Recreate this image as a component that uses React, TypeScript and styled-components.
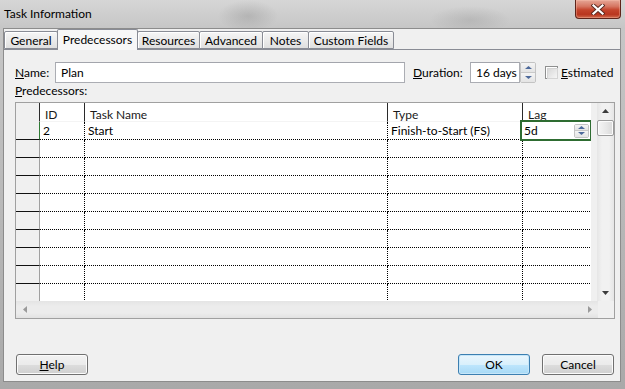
import styled, { createGlobalStyle } from 'styled-components';

const GlobalStyle = createGlobalStyle`
  html, body { margin: 0; padding: 0; background: #fff; }
  body { font-family: Lato, "Noto Sans", sans-serif; font-size: 12px; color: #000; }
  * { box-sizing: border-box; }
`;

const tabs = [
  { label: 'General', w: 54 },
  { label: 'Predecessors', w: 81, selected: true },
  { label: 'Resources', w: 63 },
  { label: 'Advanced', w: 64 },
  { label: 'Notes', w: 47 },
  { label: 'Custom Fields', w: 86 },
];

const columns = [
  { title: 'ID', w: 45 },
  { title: 'Task Name', w: 303 },
  { title: 'Type', w: 135 },
  { title: 'Lag', w: 69 },
];

const rows = [['2', 'Start', 'Finish-to-Start (FS)', '5d'], ...Array.from({ length: 9 }, () => ['', '', '', ''])];

const Window = styled.div`
  width: 625px;
  height: 389px;
  display: flex;
  flex-direction: column;
  overflow: hidden;
  background:
    radial-gradient(ellipse 30px 16px at 248px 16px, rgba(70, 70, 70, 0.18), transparent),
    radial-gradient(ellipse 40px 14px at 470px 20px, rgba(70, 70, 70, 0.14), transparent),
    linear-gradient(180deg, #d6d6d6 0, #c6c6c6 28px, #b9b9b9 200px, #a9a9a9 100%);
`;

const TitleBar = styled.div`
  height: 28px;
  flex: none;
  display: flex;
  justify-content: space-between;
  align-items: flex-start;
  padding-left: 4px;
`;

const Title = styled.div`
  line-height: 28px;
  font-size: 12px;
  color: #000;
`;

const CloseButton = styled.div`
  width: 46px;
  height: 19px;
  margin-right: 4px;
  border: 1px solid #5e241a;
  border-top: none;
  border-radius: 0 0 4px 4px;
  background: linear-gradient(180deg, #e6a696 0%, #d67763 35%, #c4442c 55%, #b9361f 80%, #cf6a4e 100%);
  box-shadow: inset 0 0 0 1px rgba(255, 200, 180, 0.35);
  display: flex;
  align-items: center;
  justify-content: center;
`;

const Client = styled.div`
  flex: 1;
  margin: 0 4px 7px 3px;
  border: 1px solid #8c8c8c;
  background: #f0f0f0;
  display: flex;
  flex-direction: column;
`;

const TabStrip = styled.div`
  height: 20px;
  flex: none;
  display: flex;
  align-items: flex-end;
`;

const Tab = styled.div<{ $w: number; $selected?: boolean }>`
  width: ${(p) => p.$w}px;
  height: ${(p) => (p.$selected ? 21 : 18)}px;
  margin-left: -1px;
  margin-bottom: ${(p) => (p.$selected ? -1 : 0)}px;
  &:first-child { margin-left: 0; }
  border: 1px solid #898c95;
  border-bottom: ${(p) => (p.$selected ? 'none' : '1px solid #898c95')};
  border-radius: 2px 2px 0 0;
  background: ${(p) =>
    p.$selected ? '#f7f7f7' : 'linear-gradient(180deg, #f6f6f6 0%, #ebebeb 50%, #dfdfdf 100%)'};
  box-shadow: ${(p) => (p.$selected ? 'none' : 'inset 1px 1px 0 #fff')};
  position: relative;
  z-index: ${(p) => (p.$selected ? 1 : 0)};
  display: flex;
  justify-content: center;
  align-items: ${(p) => (p.$selected ? 'flex-start' : 'center')};
  padding-top: ${(p) => (p.$selected ? 2 : 0)}px;
  color: #000;
  white-space: nowrap;
`;

const Panel = styled.div`
  flex: 1;
  border-top: 1px solid #898c95;
  padding: 12px 5px 6px 11px;
  display: flex;
  flex-direction: column;
`;

const FieldRow = styled.div`
  height: 21px;
  display: flex;
  align-items: center;
`;

const Label = styled.div<{ $w?: number; $ml?: number }>`
  width: ${(p) => (p.$w ? `${p.$w}px` : 'auto')};
  margin-left: ${(p) => p.$ml ?? 0}px;
  white-space: nowrap;
`;

const Key = styled.span`
  text-decoration: underline;
`;

const TextBox = styled.div<{ $w: number }>`
  width: ${(p) => p.$w}px;
  height: 21px;
  border: 1px solid #abadb3;
  border-top-color: #a3a5ac;
  background: #fff;
  padding-left: 5px;
  display: flex;
  align-items: center;
`;

const Spinner = styled.div<{ $w: number; $h: number }>`
  width: ${(p) => p.$w}px;
  height: ${(p) => p.$h}px;
  display: flex;
  flex-direction: column;
  border: 1px solid #c3c3c3;
  border-radius: 2px;
  overflow: hidden;
`;

const SpinHalf = styled.div`
  flex: 1;
  display: flex;
  align-items: center;
  justify-content: center;
  background: linear-gradient(180deg, #f4f4f4, #e4e4e4);
  & + & { border-top: 1px solid #c9c9c9; }
`;

const CheckWrap = styled.div`
  margin-left: 9px;
  display: flex;
  align-items: center;
  gap: 3px;
`;

const CheckBox = styled.div`
  width: 13px;
  height: 13px;
  border: 1px solid #8e8f8f;
  background: #fff;
  padding: 1px;
  &::after {
    content: '';
    display: block;
    width: 100%;
    height: 100%;
    border: 1px solid #d4d4d4;
    background: linear-gradient(135deg, #d8d8d8, #f6f6f6);
  }
`;

const SectionLabel = styled.div`
  height: 18px;
  margin-top: 1px;
  line-height: 14px;
`;

const GridFrame = styled.div`
  width: 600px;
  height: 217px;
  border: 1px solid #a0a0a0;
  display: flex;
  flex-direction: column;
  background: #f0f0f0;
`;

const GridMain = styled.div`
  height: 198px;
  display: flex;
`;

const Table = styled.div`
  width: 576px;
  overflow: hidden;
  display: grid;
  grid-template-columns: 24px ${columns.map((c) => `${c.w}px`).join(' ')};
  grid-template-rows: 19px;
  grid-auto-rows: 18px;
  background: #fff;
`;

const Corner = styled.div`
  background: #f0f0f0;
  border-right: 1px solid #2a2a2a;
  border-bottom: 1px solid #f0f0f0;
`;

const HeadCell = styled.div<{ $last?: boolean }>`
  background: #fff;
  border-right: 1px solid ${(p) => (p.$last ? '#a0a0a0' : '#2a2a2a')};
  border-bottom: 1px solid #f4f4f4;
  padding: 4px 0 0 5px;
  color: #1a1a1a;
`;

const RowHead = styled.div<{ $active?: boolean }>`
  background: #f0f0f0;
  border-bottom: 1px solid #111;
  border-right: 1px solid ${(p) => (p.$active ? '#2f7a34' : '#a0a0a0')};
`;

const Cell = styled.div<{ $last?: boolean }>`
  position: relative;
  background: #fff;
  border-bottom: 1px dotted #000;
  border-right: 1px ${(p) => (p.$last ? 'solid #a0a0a0' : 'dotted #000')};
  padding-left: 3px;
  line-height: 17px;
  white-space: nowrap;
`;

const LagEditor = styled.div`
  position: absolute;
  left: -3px;
  top: -2px;
  width: 72px;
  height: 21px;
  border: 2px solid #2e6c31;
  background: #fff;
  display: flex;
  align-items: center;
  justify-content: space-between;
  padding: 0 1px 0 2px;
  z-index: 2;
`;

const Gutter = styled.div`
  width: 6px;
  background: #f0f0f0;
`;

const VScroll = styled.div`
  flex: 1;
  display: flex;
  flex-direction: column;
  background: linear-gradient(90deg, #e6e6e6, #f1f1f1 30%, #f1f1f1 70%, #e6e6e6);
`;

const ScrollBtn = styled.div<{ $size: number }>`
  flex: none;
  width: ${(p) => p.$size}px;
  height: ${(p) => p.$size}px;
  display: flex;
  align-items: center;
  justify-content: center;
`;

const VThumb = styled.div`
  height: 16px;
  margin: 1px 0 0 0;
  border: 1px solid #9b9b9b;
  border-radius: 2px;
  background: linear-gradient(90deg, #f5f5f5, #e6e6e6 60%, #d9d9d9);
  box-shadow: inset 0 0 0 1px #fbfbfb;
`;

const Fill = styled.div`
  flex: 1;
`;

const HScrollRow = styled.div`
  height: 17px;
  display: flex;
`;

const HScroll = styled.div`
  width: 582px;
  display: flex;
  justify-content: space-between;
  background: linear-gradient(180deg, #e4e4e4, #ececec 30%, #ececec 70%, #e2e2e2);
`;

const ButtonRow = styled.div`
  margin-top: auto;
  display: flex;
  align-items: center;
  gap: 12px;
  padding: 0 1px 0 1px;
`;

const Button = styled.div<{ $primary?: boolean }>`
  width: 72px;
  height: 21px;
  border: 1px solid ${(p) => (p.$primary ? '#3c7fb1' : '#707070')};
  border-radius: 3px;
  background: ${(p) =>
    p.$primary
      ? 'linear-gradient(180deg, #eaf6fd 0%, #d9f0fc 50%, #bee6fd 51%, #a7d9f5 100%)'
      : 'linear-gradient(180deg, #f2f2f2 0%, #ebebeb 50%, #dddddd 51%, #cfcfcf 100%)'};
  box-shadow: inset 0 0 0 1px ${(p) => (p.$primary ? '#c6e6f9' : '#fbfbfb')};
  display: flex;
  align-items: center;
  justify-content: center;
  color: #000;
  &:first-child { margin-right: auto; }
`;

const Tri = ({ dir, color, w = 7, h = 4 }: { dir: 'up' | 'down' | 'left' | 'right'; color: string; w?: number; h?: number }) => {
  const pts =
    dir === 'up'
      ? `0,${h} ${w / 2},0 ${w},${h}`
      : dir === 'down'
      ? `0,0 ${w},0 ${w / 2},${h}`
      : dir === 'left'
      ? `${w},0 ${w},${h} 0,${h / 2}`
      : `0,0 0,${h} ${w},${h / 2}`;
  return (
    <svg width={w} height={h} viewBox={`0 0 ${w} ${h}`}>
      <polygon points={pts} fill={color} />
    </svg>
  );
};

const CloseGlyph = () => (
  <svg width="14" height="11" viewBox="0 0 14 11">
    <path d="M2.5 1.5 L11.5 9.5 M11.5 1.5 L2.5 9.5" stroke="#5a2a20" strokeWidth="4" strokeLinecap="square" />
    <path d="M2.5 1.5 L11.5 9.5 M11.5 1.5 L2.5 9.5" stroke="#fff" strokeWidth="2.2" strokeLinecap="square" />
  </svg>
);

const SpinButtons = ({ w, h }: { w: number; h: number }) => (
  <Spinner $w={w} $h={h}>
    <SpinHalf>
      <Tri dir="up" color="#4e6a9b" w={7} h={3} />
    </SpinHalf>
    <SpinHalf>
      <Tri dir="down" color="#4e6a9b" w={7} h={3} />
    </SpinHalf>
  </Spinner>
);

const App = () => {
  return (
    <>
      <GlobalStyle />
      <Window>
        <TitleBar>
          <Title>Task Information</Title>
          <CloseButton>
            <CloseGlyph />
          </CloseButton>
        </TitleBar>
        <Client>
          <TabStrip>
            {tabs.map((t) => (
              <Tab key={t.label} $w={t.w} $selected={t.selected}>
                {t.label}
              </Tab>
            ))}
          </TabStrip>
          <Panel>
            <FieldRow>
              <Label $w={40}>
                <Key>N</Key>ame:
              </Label>
              <TextBox $w={350}>Plan</TextBox>
              <Label $w={57} $ml={8}>
                <Key>D</Key>uration:
              </Label>
              <TextBox $w={50}>16 days</TextBox>
              <SpinButtons w={16} h={21} />
              <CheckWrap>
                <CheckBox />
                <Label>
                  <Key>E</Key>stimated
                </Label>
              </CheckWrap>
            </FieldRow>
            <SectionLabel>
              <Key>P</Key>redecessors:
            </SectionLabel>
            <GridFrame>
              <GridMain>
                <Table>
                  <Corner />
                  {columns.map((c, i) => (
                    <HeadCell key={c.title} $last={i === columns.length - 1}>
                      {c.title}
                    </HeadCell>
                  ))}
                  {rows.map((r, ri) => [
                    <RowHead key={`h${ri}`} $active={ri === 0} />,
                    ...r.map((v, ci) => {
                      const last = ci === r.length - 1;
                      return (
                        <Cell key={`${ri}-${ci}`} $last={last}>
                          {last && ri === 0 ? (
                            <LagEditor>
                              <span>{v}</span>
                              <SpinButtons w={15} h={14} />
                            </LagEditor>
                          ) : (
                            v
                          )}
                        </Cell>
                      );
                    }),
                  ])}
                </Table>
                <Gutter />
                <VScroll>
                  <ScrollBtn $size={16}>
                    <Tri dir="up" color="#3c3c3c" />
                  </ScrollBtn>
                  <VThumb />
                  <Fill />
                  <ScrollBtn $size={17}>
                    <Tri dir="down" color="#3c3c3c" />
                  </ScrollBtn>
                </VScroll>
              </GridMain>
              <HScrollRow>
                <HScroll>
                  <ScrollBtn $size={17}>
                    <Tri dir="left" color="#9a9a9a" w={4} h={7} />
                  </ScrollBtn>
                  <ScrollBtn $size={17}>
                    <Tri dir="right" color="#9a9a9a" w={4} h={7} />
                  </ScrollBtn>
                </HScroll>
              </HScrollRow>
            </GridFrame>
            <ButtonRow>
              <Button>
                <span>
                  <Key>H</Key>elp
                </span>
              </Button>
              <Button $primary>OK</Button>
              <Button>Cancel</Button>
            </ButtonRow>
          </Panel>
        </Client>
      </Window>
    </>
  );
};

export default App;
